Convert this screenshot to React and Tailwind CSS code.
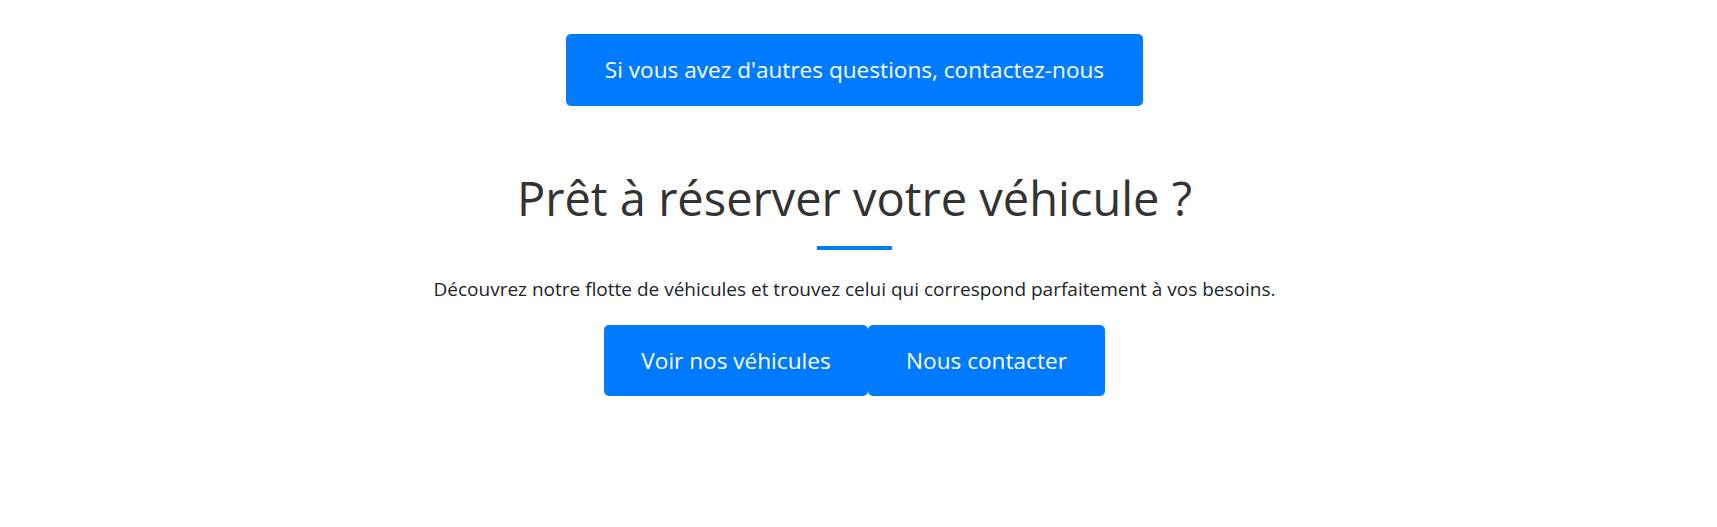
import React from 'react';

const font = { fontFamily: '"Segoe UI", "Open Sans", "Noto Sans", sans-serif' };

const CtaButton = ({ children, className = '' }) => (
  <a
    href="#"
    className={`inline-flex items-center justify-center bg-[#007bff] text-white rounded-[5px] text-[22.6px] leading-[32px] ${className}`}
  >
    {children}
  </a>
);

const App = () => {
  return (
    <div className="w-full min-h-[527px] bg-white pr-[8px]" style={font}>
      <div className="flex flex-col items-center pt-[34px]">
        <CtaButton className="w-[577px] h-[72px]">Si vous avez d'autres questions, contactez-nous</CtaButton>

        <h2 className="mt-[60px] text-[47px] leading-[64px] font-normal text-[#333333]">
          Prêt à réserver votre véhicule ?
        </h2>
        <div className="mt-[16px] w-[75px] h-[4px] bg-[#007bff]" />

        <p className="mt-[25px] text-[19px] leading-[28px] text-[#212529]">
          Découvrez notre flotte de véhicules et trouvez celui qui correspond parfaitement à vos besoins.
        </p>

        <div className="mt-[22px] flex">
          <CtaButton className="w-[264px] h-[71px]">Voir nos véhicules</CtaButton>
          <CtaButton className="w-[237px] h-[71px]">Nous contacter</CtaButton>
        </div>
      </div>
    </div>
  );
};

export default App;
